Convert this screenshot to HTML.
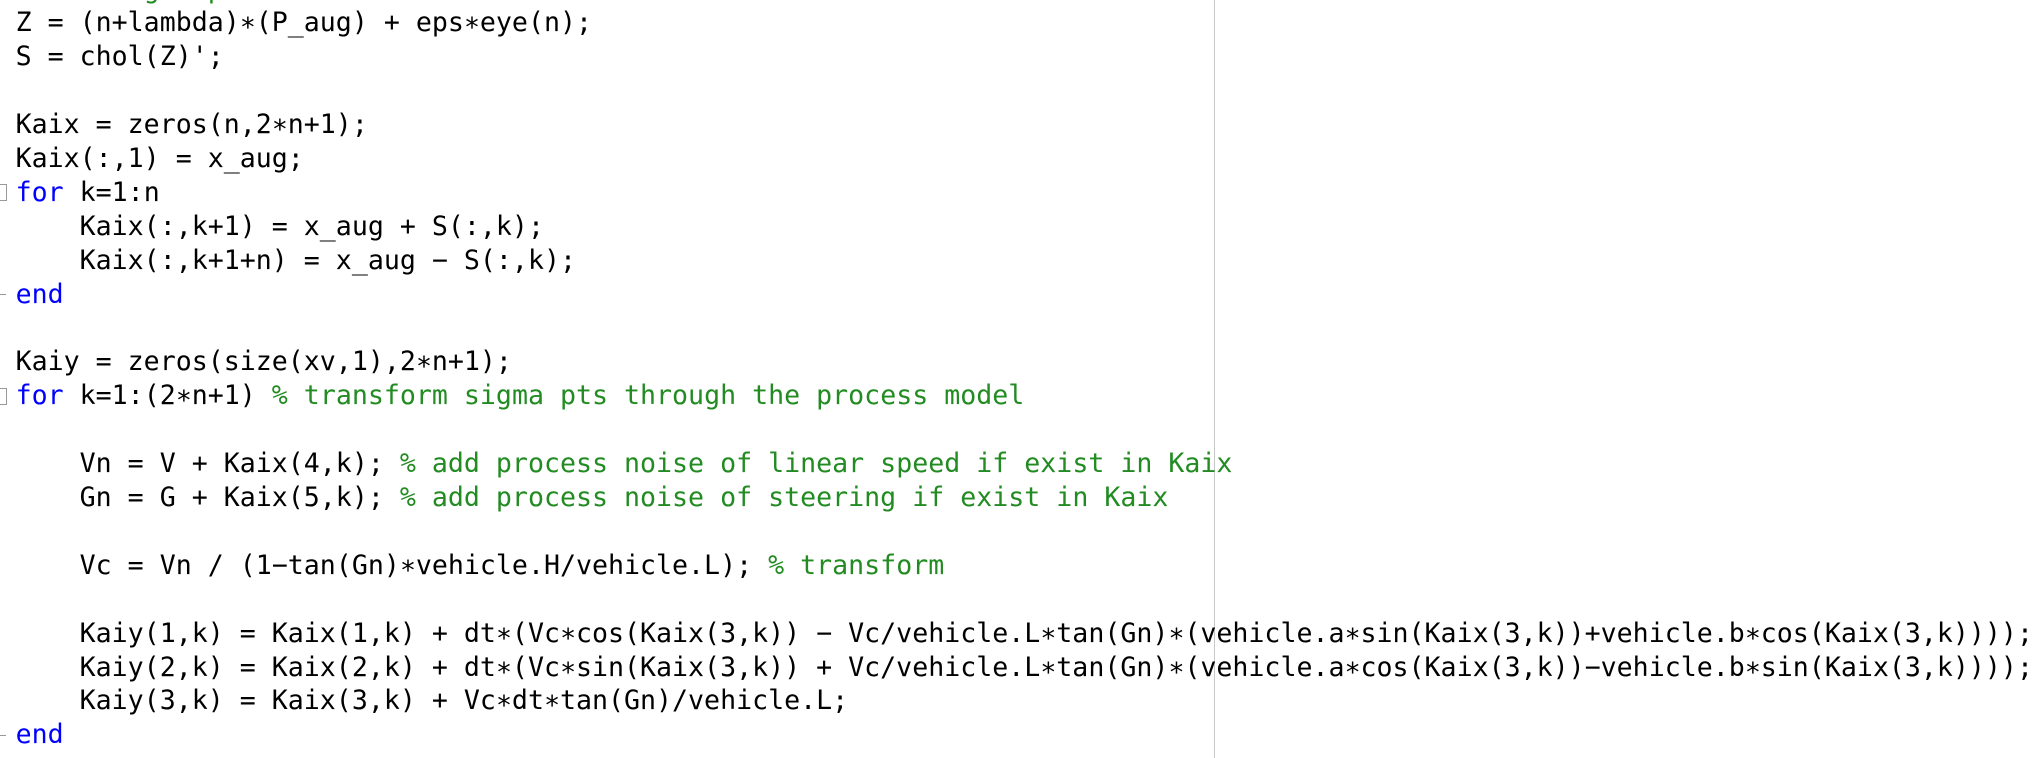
<!DOCTYPE html>
<html><head><meta charset="utf-8"><style>
html,body{margin:0;padding:0;background:#fff;width:2038px;height:758px;overflow:hidden;position:relative}
.l{position:absolute;left:15.6px;font-family:"DejaVu Sans Mono","Liberation Mono",monospace;font-size:26.6px;line-height:34px;height:34px;white-space:pre;color:#000}
.k{color:#0000ff}.c{color:#228b22}
.vl{position:absolute;left:1214px;top:0;width:1px;height:758px;background:#c8c8c8}
.box{position:absolute;left:-2px;width:7px;height:15px;border:1px solid #999;background:#fff}
.dash{position:absolute;left:0;width:6px;height:1px;background:#999}
</style></head><body>
<div class="vl"></div>
<div class="l" style="top:-27px"><span class="c">% the sigma points</span></div>
<div class="l" style="top:6.4px">Z = (n+lambda)∗(P_aug) + eps∗eye(n);</div>
<div class="l" style="top:40.3px">S = chol(Z)';</div>
<div class="l" style="top:108.1px">Kaix = zeros(n,2∗n+1);</div>
<div class="l" style="top:142px">Kaix(:,1) = x_aug;</div>
<div class="box" style="top:184px"></div>
<div class="l" style="top:175.9px"><span class="k">for</span> k=1:n</div>
<div class="l" style="top:209.8px">    Kaix(:,k+1) = x_aug + S(:,k);</div>
<div class="l" style="top:243.7px">    Kaix(:,k+1+n) = x_aug − S(:,k);</div>
<div class="dash" style="top:294px"></div>
<div class="l" style="top:277.6px"><span class="k">end</span></div>
<div class="l" style="top:345.4px">Kaiy = zeros(size(xv,1),2∗n+1);</div>
<div class="box" style="top:388px"></div>
<div class="l" style="top:379.3px"><span class="k">for</span> k=1:(2∗n+1) <span class="c">% transform sigma pts through the process model</span></div>
<div class="l" style="top:447.1px">    Vn = V + Kaix(4,k); <span class="c">% add process noise of linear speed if exist in Kaix</span></div>
<div class="l" style="top:481px">    Gn = G + Kaix(5,k); <span class="c">% add process noise of steering if exist in Kaix</span></div>
<div class="l" style="top:548.8px">    Vc = Vn / (1−tan(Gn)∗vehicle.H/vehicle.L); <span class="c">% transform</span></div>
<div class="l" style="top:616.6px">    Kaiy(1,k) = Kaix(1,k) + dt∗(Vc∗cos(Kaix(3,k)) − Vc/vehicle.L∗tan(Gn)∗(vehicle.a∗sin(Kaix(3,k))+vehicle.b∗cos(Kaix(3,k))));</div>
<div class="l" style="top:650.5px">    Kaiy(2,k) = Kaix(2,k) + dt∗(Vc∗sin(Kaix(3,k)) + Vc/vehicle.L∗tan(Gn)∗(vehicle.a∗cos(Kaix(3,k))−vehicle.b∗sin(Kaix(3,k))));</div>
<div class="l" style="top:684.4px">    Kaiy(3,k) = Kaix(3,k) + Vc∗dt∗tan(Gn)/vehicle.L;</div>
<div class="dash" style="top:735px"></div>
<div class="l" style="top:718.3px"><span class="k">end</span></div>
</body></html>
